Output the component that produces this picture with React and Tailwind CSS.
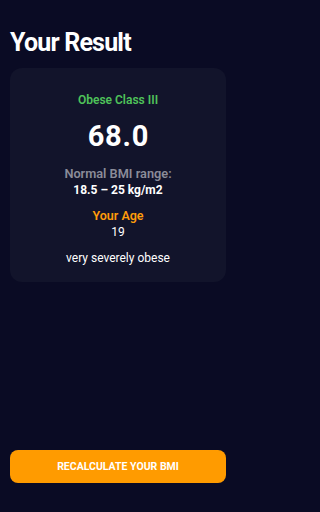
import React from "react";

const result = {
  category: "Obese Class III",
  bmi: "68.0",
  range: "18.5 – 25 kg/m2",
  age: 19,
  advice: "very severely obese",
};

export default function App() {
  return (
    <div className="min-h-[512px] w-full bg-[#0a0b24]">
      <div
        className="h-[512px] w-[236px] flex flex-col px-[10px]"
        style={{ fontFamily: "Roboto, 'Liberation Sans', sans-serif" }}
      >
        <h1 className="mt-[28px] text-[25px] leading-[30px] font-bold tracking-[-0.8px] text-white">
          Your Result
        </h1>

        <div className="mt-[10px] h-[214px] rounded-[12px] bg-[#12142b] flex flex-col items-center pt-[24px]">
          <p className="text-[12px] leading-[16px] font-semibold text-[#4fc35a]">
            {result.category}
          </p>
          <p className="mt-[12px] pl-[0.8px] text-[29px] leading-[32px] font-bold tracking-[0.8px] text-white">
            {result.bmi}
          </p>
          <p className="mt-[14px] text-[12.75px] leading-[16px] font-semibold text-[#8b8c99]">
            Normal BMI range:
          </p>
          <p className="text-[12px] leading-[17px] font-bold text-white">
            {result.range}
          </p>
          <p className="mt-[8px] text-[12.5px] leading-[17px] font-semibold text-[#ff9c0a]">
            Your Age
          </p>
          <p className="text-[12px] leading-[16px] text-white">{result.age}</p>
          <p className="mt-[10px] text-[12px] leading-[16px] text-white">
            {result.advice}
          </p>
        </div>

        <div className="flex-1" />

        <button className="mb-[29px] h-[33px] w-full rounded-[8px] bg-[#ff9b00] text-white text-[10.5px] font-bold">
          RECALCULATE YOUR BMI
        </button>
      </div>
    </div>
  );
}
